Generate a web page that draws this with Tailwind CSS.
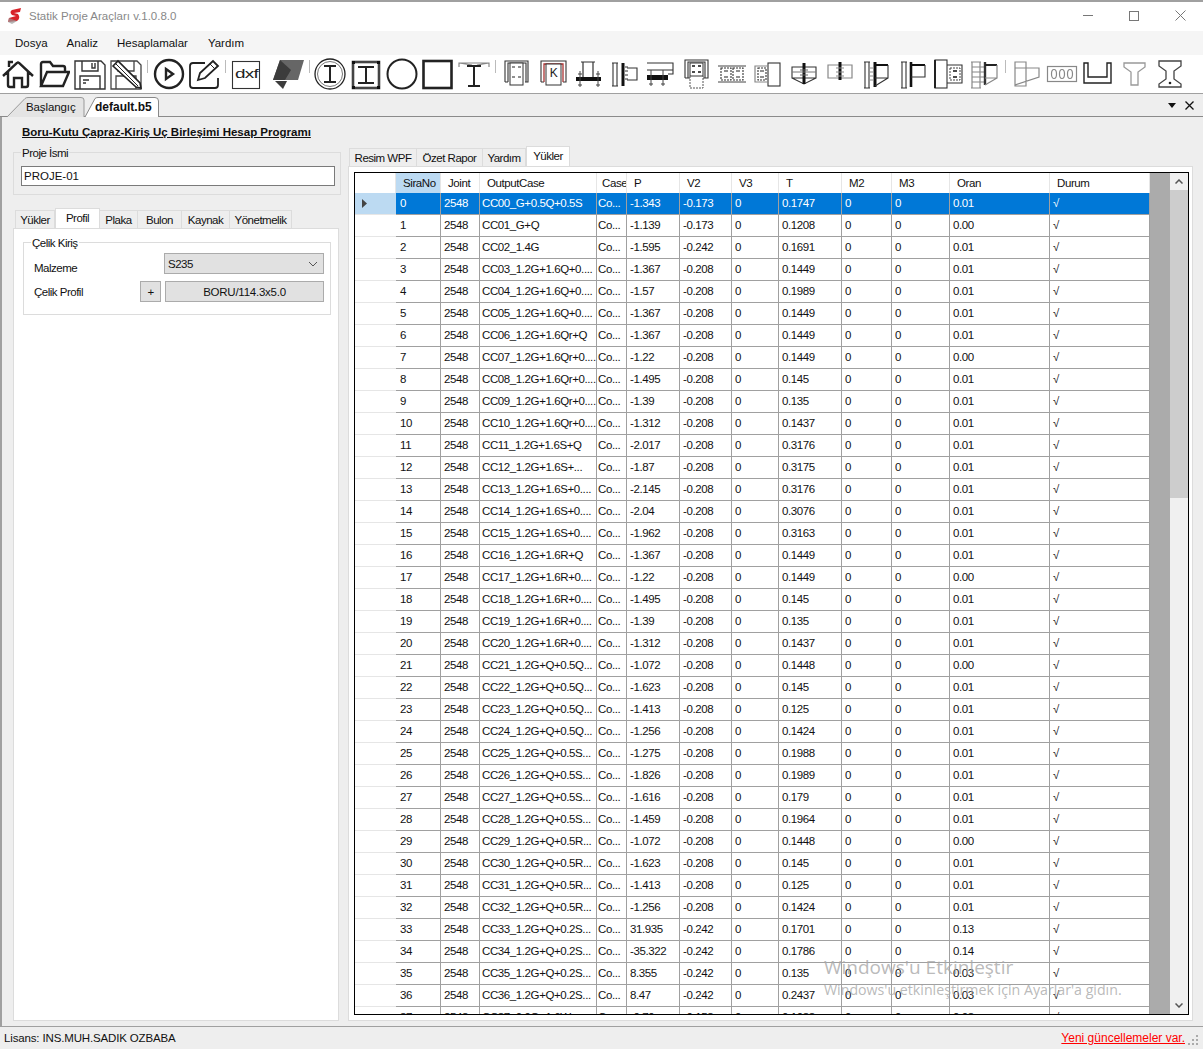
<!DOCTYPE html>
<html lang="tr">
<head>
<meta charset="UTF-8">
<title>Statik Proje Araçları</title>
<script src="https://cdn.jsdelivr.net/npm/@tailwindcss/browser@4"></script>
</head>
<body class="bg-[#eeeeee]">
<div class="relative flex h-[1049px] w-[1203px] flex-col overflow-hidden border-t-2 border-[#a0a0a0] font-['Liberation_Sans',sans-serif] text-[11.5px] leading-[16px] tracking-[-0.5px] text-[#111]">

  <!-- title bar -->
  <div class="flex h-[29px] shrink-0 items-center bg-white pb-[2px] tracking-normal">
    <svg class="ml-[7px] h-[18px] w-[16px]" viewBox="0 0 16 18"><path d="M14 1 L5 3 Q2 5 5 8 L9 9 L2 11 L1 15 L10 14 Q14 11 11 7 L7 6 L13 5 Z" fill="#d8232a"/><path d="M2 11 L1 15 L5 17 L10 14 Z" fill="#999" opacity=".7"/></svg>
    <span class="ml-[6px] text-[#888]">Statik Proje Araçları v.1.0.8.0</span>
    <div class="ml-auto flex items-center gap-[36px] pr-[17px]">
      <div class="h-px w-[10px] bg-[#777]"></div>
      <div class="h-[10px] w-[10px] border border-[#777]"></div>
      <svg class="h-[11px] w-[11px]" viewBox="0 0 11 11"><path d="M.5 .5 10.5 10.5M10.5 .5 .5 10.5" stroke="#777" fill="none"/></svg>
    </div>
  </div>

  <!-- menu -->
  <div class="flex h-[24px] shrink-0 items-center gap-[19px] bg-[#f5f5f5] pl-[15px] tracking-normal">
    <span>Dosya</span><span>Analiz</span><span>Hesaplamalar</span><span class="ml-px">Yardım</span>
  </div>

  <!-- toolbar -->
  <div id="toolbar" class="relative h-[39px] shrink-0 border-b border-[#a0a0a0] bg-white"></div>

  <!-- document tabs -->
  <div class="relative flex h-[23px] shrink-0 items-end border-b border-[#8a8a8a] bg-[#eeeeee]">
    <svg class="absolute left-0 top-[3px] h-[20px] w-[170px]" viewBox="0 0 170 20">
      <path d="M7 20 25 1.5Q26 .5 28 .5H81Q84 .5 84 3V20" fill="#e4e4e4" stroke="#999"/>
      <path d="M85 20 95 1.5Q96 .5 98 .5H155Q158.500 .5 158.500 4V20" fill="#fff" stroke="#888"/>
    </svg>
    <span class="relative ml-[26px] flex h-[19px] w-[69px] items-center tracking-[-0.1px]">Başlangıç</span>
    <span class="relative flex h-[19px] items-center text-[12px] font-bold tracking-normal">default.b5</span>
    <svg class="absolute right-[27px] top-[9px] h-[6px] w-[8px]" viewBox="0 0 8 6"><path d="M0 0H8L4 5Z" fill="#111"/></svg>
    <svg class="absolute right-[9px] top-[7px] h-[9px] w-[9px]" viewBox="0 0 9 9"><path d="M.5 .5 8.5 8.5M8.5 .5 .5 8.5" stroke="#111" stroke-width="1.3" fill="none"/></svg>
  </div>

  <!-- body -->
  <div class="flex min-h-0 flex-1 border-l-2 border-[#a0a0a0]">
    <!-- left panel -->
    <div class="w-[346px] shrink-0 pl-[11px] pt-[7px]">
      <div class="ml-[9px] font-bold tracking-normal underline">Boru-Kutu Çapraz-Kiriş Uç Birleşimi Hesap Programı</div>
      <div class="relative mt-[12px] h-[43px] w-[328px] border border-[#dcdcdc] pl-[7px] pt-[13px]">
        <span class="absolute left-[7px] top-[-8px] bg-[#eeeeee] px-px">Proje İsmi</span>
        <div class="flex h-[20px] w-[314px] items-center border border-[#7a7a7a] bg-white pl-[2px] tracking-normal">PROJE-01</div>
      </div>
      <div class="mt-[13px] flex h-[20px] items-end pl-[2px]">
        <div class="flex h-[18px] w-[40px] items-center justify-center border border-b-0 border-[#dcdcdc]">Yükler</div>
        <div class="flex h-[20px] w-[45px] items-start justify-center border border-b-0 border-[#dcdcdc] bg-white pt-px">Profil</div>
        <div class="flex h-[18px] w-[38px] items-center justify-center border border-b-0 border-l-0 border-[#dcdcdc]">Plaka</div>
        <div class="flex h-[18px] w-[44px] items-center justify-center border border-b-0 border-l-0 border-[#dcdcdc]">Bulon</div>
        <div class="flex h-[18px] w-[48px] items-center justify-center border border-b-0 border-l-0 border-[#dcdcdc]">Kaynak</div>
        <div class="flex h-[18px] w-[62px] items-center justify-center border border-b-0 border-l-0 border-[#dcdcdc]">Yönetmelik</div>
      </div>
      <div class="h-[793px] w-[326px] border border-[#dcdcdc] bg-white pl-[9px] pt-[13px]">
        <div class="relative flex h-[73px] w-[308px] flex-col gap-[7px] border border-[#dcdcdc] pl-[10px] pt-[10px]">
          <span class="absolute left-[7px] top-[-8px] bg-white px-px">Çelik Kiriş</span>
          <div class="flex h-[21px] items-center">
            <span class="w-[130px] pt-[8px]">Malzeme</span>
            <div class="flex h-[21px] w-[160px] items-center justify-between border border-[#ababab] bg-[#e1e1e1] px-[3px]">
              <span>S235</span>
              <svg class="mr-[2px] h-[6px] w-[10px]" viewBox="0 0 10 6"><path d="M1 1 5 5 9 1" stroke="#555" fill="none"/></svg>
            </div>
          </div>
          <div class="flex h-[21px] items-center">
            <span class="w-[106px]">Çelik Profil</span>
            <div class="flex h-[21px] w-[21px] items-center justify-center border border-[#ababab] bg-[#e1e1e1]">+</div>
            <div class="ml-[4px] flex h-[21px] w-[159px] items-center justify-center border border-[#ababab] bg-[#e1e1e1] tracking-[-0.25px]">BORU/114.3x5.0</div>
          </div>
        </div>
      </div>
    </div>

    <!-- right panel -->
    <div class="w-[853px] pt-[29px]">
      <div class="flex h-[20px] items-end pl-px">
        <div class="flex h-[18px] w-[68px] items-center justify-center border border-b-0 border-[#dcdcdc]">Resim WPF</div>
        <div class="flex h-[18px] w-[66px] items-center justify-center border border-b-0 border-l-0 border-[#dcdcdc]">Özet Rapor</div>
        <div class="flex h-[18px] w-[43px] items-center justify-center border border-b-0 border-l-0 border-[#dcdcdc]">Yardım</div>
        <div class="flex h-[20px] w-[44px] items-start justify-center border border-b-0 border-[#dcdcdc] bg-white pt-px">Yükler</div>
      </div>
      <div class="h-[855px] w-[845px] border border-[#dcdcdc] bg-white pl-[5px] pt-[5px]">
        <div class="flex h-[843px] w-[835px] border border-black">
          <div id="grid" class="h-full w-[795px] shrink-0 overflow-hidden tracking-[-0.4px]"></div>
          <div class="h-full w-[20px] shrink-0 bg-[#ababab]"></div>
          <div class="flex h-full w-[18px] shrink-0 flex-col bg-[#f0f0f0]">
            <div class="flex h-[17px] items-center justify-center">
              <svg class="h-[5px] w-[8px]" viewBox="0 0 8 5"><path d="M.5 4.5 4 1 7.5 4.5" stroke="#555" stroke-width="1.5" fill="none"/></svg>
            </div>
            <div class="h-[308px] bg-[#cdcdcd]"></div>
            <div class="mt-auto flex h-[17px] items-center justify-center">
              <svg class="h-[5px] w-[8px]" viewBox="0 0 8 5"><path d="M.5 .5 4 4 7.5 .5" stroke="#555" stroke-width="1.5" fill="none"/></svg>
            </div>
          </div>
        </div>
      </div>
    </div>
  </div>

  <!-- status bar -->
  <div class="flex h-[23px] shrink-0 items-center justify-between border-t border-[#a0a0a0] bg-[#eeeeee] pl-[4px] pr-[18px] tracking-[-0.15px]">
    <span>Lisans: INS.MUH.SADIK OZBABA</span>
    <span class="text-[12px] tracking-normal text-[#f00] underline">Yeni güncellemeler var.</span>
  </div>
  <svg class="absolute bottom-[3px] right-[4px] h-[11px] w-[11px]" viewBox="0 0 11 11" fill="#aaa"><rect x="8" y="0" width="2" height="2"/><rect x="4" y="4" width="2" height="2"/><rect x="8" y="4" width="2" height="2"/><rect x="0" y="8" width="2" height="2"/><rect x="4" y="8" width="2" height="2"/><rect x="8" y="8" width="2" height="2"/></svg>

  <!-- activation watermark -->
  <div class="pointer-events-none absolute left-[824px] top-[952px] font-['Open_Sans',sans-serif] text-[19px] leading-[26px] tracking-normal text-[#a8a8a8]/80">Windows'u Etkinleştir</div>
  <div class="pointer-events-none absolute left-[824px] top-[978px] font-['Open_Sans',sans-serif] text-[14.2px] leading-[20px] tracking-normal text-[#a8a8a8]/80">Windows'u etkinleştirmek için Ayarlar'a gidın.</div>
</div>

<script>
// [case, P, V2, T, Oran]
const rows = [
['CC00_G+0.5Q+0.5S','-1.343','-0.173','0.1747','0.01'],['CC01_G+Q','-1.139','-0.173','0.1208','0.00'],
['CC02_1.4G','-1.595','-0.242','0.1691','0.01'],['CC03_1.2G+1.6Q+0....','-1.367','-0.208','0.1449','0.01'],
['CC04_1.2G+1.6Q+0....','-1.57','-0.208','0.1989','0.01'],['CC05_1.2G+1.6Q+0....','-1.367','-0.208','0.1449','0.01'],
['CC06_1.2G+1.6Qr+Q','-1.367','-0.208','0.1449','0.01'],['CC07_1.2G+1.6Qr+0....','-1.22','-0.208','0.1449','0.00'],
['CC08_1.2G+1.6Qr+0....','-1.495','-0.208','0.145','0.01'],['CC09_1.2G+1.6Qr+0....','-1.39','-0.208','0.135','0.01'],
['CC10_1.2G+1.6Qr+0....','-1.312','-0.208','0.1437','0.01'],['CC11_1.2G+1.6S+Q','-2.017','-0.208','0.3176','0.01'],
['CC12_1.2G+1.6S+...','-1.87','-0.208','0.3175','0.01'],['CC13_1.2G+1.6S+0....','-2.145','-0.208','0.3176','0.01'],
['CC14_1.2G+1.6S+0....','-2.04','-0.208','0.3076','0.01'],['CC15_1.2G+1.6S+0....','-1.962','-0.208','0.3163','0.01'],
['CC16_1.2G+1.6R+Q','-1.367','-0.208','0.1449','0.01'],['CC17_1.2G+1.6R+0....','-1.22','-0.208','0.1449','0.00'],
['CC18_1.2G+1.6R+0....','-1.495','-0.208','0.145','0.01'],['CC19_1.2G+1.6R+0....','-1.39','-0.208','0.135','0.01'],
['CC20_1.2G+1.6R+0....','-1.312','-0.208','0.1437','0.01'],['CC21_1.2G+Q+0.5Q...','-1.072','-0.208','0.1448','0.00'],
['CC22_1.2G+Q+0.5Q...','-1.623','-0.208','0.145','0.01'],['CC23_1.2G+Q+0.5Q...','-1.413','-0.208','0.125','0.01'],
['CC24_1.2G+Q+0.5Q...','-1.256','-0.208','0.1424','0.01'],['CC25_1.2G+Q+0.5S...','-1.275','-0.208','0.1988','0.01'],
['CC26_1.2G+Q+0.5S...','-1.826','-0.208','0.1989','0.01'],['CC27_1.2G+Q+0.5S...','-1.616','-0.208','0.179','0.01'],
['CC28_1.2G+Q+0.5S...','-1.459','-0.208','0.1964','0.01'],['CC29_1.2G+Q+0.5R...','-1.072','-0.208','0.1448','0.00'],
['CC30_1.2G+Q+0.5R...','-1.623','-0.208','0.145','0.01'],['CC31_1.2G+Q+0.5R...','-1.413','-0.208','0.125','0.01'],
['CC32_1.2G+Q+0.5R...','-1.256','-0.208','0.1424','0.01'],['CC33_1.2G+Q+0.2S...','31.935','-0.242','0.1701','0.13'],
['CC34_1.2G+Q+0.2S...','-35.322','-0.242','0.1786','0.14'],['CC35_1.2G+Q+0.2S...','8.355','-0.242','0.135','0.03'],
['CC36_1.2G+Q+0.2S...','8.47','-0.242','0.2437','0.03'],['CC37_0.9G+1.6W...','-0.79','-0.158','0.1033','0.03']
];
const rowCls = 'grid grid-cols-[41px_45px_39px_117px_30px_53px_52px_47px_63px_50px_58px_100px_100px]';
const headers = ['', 'SiraNo', 'Joint', 'OutputCase', 'Case', 'P', 'V2', 'V3', 'T', 'M2', 'M3', 'Oran', 'Durum'];
let html = '<div class="' + rowCls + ' h-[20px]">' + headers.map((h, i) =>
  '<div class="flex items-center overflow-hidden whitespace-nowrap border-r border-[#e6e6e6] ' + (i == 4 ? 'pl-[5px] ' : 'pl-[7px] ') + (i == 1 ? 'bg-[#bcdaf2]' : 'bg-white') + '">' + h + '</div>').join('') + '</div>';
rows.forEach((r, i) => {
  const sel = i == 0;
  const cell = 'flex items-center overflow-hidden whitespace-nowrap border-b border-r border-[#a0a0a0] pb-[2px] ' + (sel ? 'bg-[#0078d7] text-white ' : 'bg-white ');
  const vals = [i, '2548', r[0], 'Co...', r[1], r[2], '0', r[3], '0', '0', r[4], '√'];
  html += '<div class="' + rowCls + ' h-[22px]">'
    + '<div class="flex items-center border-b border-[#e6e6e6] pl-[7px] ' + (sel ? 'bg-[#bcdaf2]' : 'bg-white') + '">'
    + (sel ? '<svg class="h-[9px] w-[5px]" viewBox="0 0 5 9"><path d="M0 0 5 4.500 0 9Z" fill="#444"/></svg>' : '') + '</div>'
    + vals.map((v, j) => '<div class="' + cell + (j == 0 ? 'pl-[4px]' : j == 2 ? 'pl-[2px]' : j == 3 ? 'pl-px' : 'pl-[3px]') + '">' + v + '</div>').join('') + '</div>';
});
document.getElementById('grid').innerHTML = html;

// toolbar icons: [center x, svg body] in a 32x32 box
const dark = 'fill="none" stroke="#222" stroke-width="2.4"';
const mid = 'fill="none" stroke="#222" stroke-width="1.8"';
const thin = 'fill="none" stroke="#333" stroke-width="1.1"';
const gray = 'fill="none" stroke="#888" stroke-width="1.2"';
const beam = '<path d="M11 9H23M17 9V25M11 25H23" fill="none" stroke="#222" stroke-width="2"/>';
const bolts = '<path d="M12 9h3M18 9h3M12 19h3M18 19h3" stroke="#222" stroke-width="1.2"/>';
const ticks = '<path d="M10 10H14M10 14H14M10 18H14M10 22H14" stroke="#888"/>';
const icons = [
  [18, '<path d="M1 18 15 5Q16 4 17 5L31 18M6 14V27Q6 29 8 29H12V20H20V29H24Q26 29 26 27V14M7 9V4H11" ' + dark + '/>'],
  [54, '<path d="M3 28V6Q3 4 5 4H12L15 8H25Q27 8 27 10V14M3 28H25L31 14H9L3 28Z" ' + dark + '/>'],
  [90, '<path d="M1 3H27L31 7V31H1ZM8 3V13H24V3M6 31V18H26V31M9 22H15M9 25H12M18 5V10H21V5" fill="none" stroke="#333" stroke-width="1.4"/>'],
  [126, '<path d="M1 3H27L31 7V31H1ZM8 3V13H24V3M6 31V18H26V31" fill="none" stroke="#444" stroke-width="1.3"/><path d="M3 8 8 3 30 25 31 30 26 29Z" fill="#fff" stroke="#222" stroke-width="1.6"/><path d="M6 6 28 28" stroke="#222"/>'],
  [169, '<circle cx="16" cy="16" r="14" ' + dark + '/><path d="M13 11 20 16 13 21Z" ' + dark + '/>'],
  [204, '<path d="M17 5H5Q2 5 2 8V27Q2 30 5 30H27Q30 30 30 27V20" ' + mid + '/><path d="M10 22 12 15 25 3 30 8 17 20Z" ' + mid + '/><path d="M22 6 27 11" stroke="#222"/>'],
  [246, '<rect x="2.500" y="3.500" width="27" height="27" fill="none" stroke="#333" stroke-width="1.1"/><text x="5" y="20" textLength="23" lengthAdjust="spacingAndGlyphs" font-family="Liberation Sans" font-size="13" fill="#222">dxf</text>'],
  [288, '<path d="M8 2H32L26 22H1Z" fill="#666"/><path d="M8 2 19 12 13 22H1Z" fill="#3c3c3c"/><path d="M3 23H15L11 31Z" fill="#3c3c3c"/>'],
  [330, '<circle cx="16" cy="16" r="15" fill="none" stroke="#222" stroke-width="1.3"/><circle cx="16" cy="16" r="12.500" fill="none" stroke="#777"/><g transform="translate(-1 -1)">' + beam + '</g>'],
  [366, '<rect x="3" y="4" width="26" height="26" fill="none" stroke="#444" stroke-width="2.6"/><path d="M2 3h3v3H2zM27 3h3v3h-3zM2 28h3v3H2zM27 28h3v3h-3z" fill="#111"/><g transform="translate(-1 0)"><path d="M9 9H25M17 9V25M9 25H25" fill="none" stroke="#222" stroke-width="2"/></g>'],
  [402, '<circle cx="16" cy="16" r="14.500" fill="none" stroke="#222" stroke-width="2"/>'],
  [438, '<rect x="1.500" y="3" width="28" height="27" fill="none" stroke="#222" stroke-width="2.6"/>'],
  [474, '<path d="M1 9V5H31V9M1 5 14 7M31 5 19 7" ' + gray + '/><path d="M9 8H23M16 8V28M10 28H22" fill="none" stroke="#222" stroke-width="2"/>'],
  [516, '<path d="M5 24V3H28V24H25M8 24H5M8 24V5H26V24" ' + thin + '/><rect x="10" y="5" width="13" height="22" fill="#fff" stroke="#333"/>' + bolts],
  [552, '<path d="M5 24V3H30V24H27M8 24H5" ' + thin + '/><path d="M8 24V6H27V24" fill="none" stroke="#a33" stroke-width="1.3"/><rect x="10" y="6" width="15" height="21" fill="#fff" stroke="#333"/><text x="17.500" y="19" text-anchor="middle" font-family="Liberation Sans" font-size="12" fill="#222">K</text>'],
  [588, '<path d="M11 4V20M21 4V20M9 4H23" fill="none" stroke="#333" stroke-width="1.2"/><path d="M4 21H29" stroke="#111" stroke-width="4"/><path d="M8 13V29M26 13V29" stroke="#444"/><path d="M6 16H10M24 16H28M6 27H10M24 27H28" stroke="#444"/>'],
  [624, '<path d="M5 5V28M9 5V28M4 5H10M4 28H10" ' + thin + '/><path d="M15 5V28" stroke="#111" stroke-width="3"/><path d="M19 10H29V22H19" ' + thin + '/><path d="M17 9H20M17 13H20M17 17H20M17 21H20" stroke="#333"/>'],
  [660, '<path d="M3 5H29V16H24M3 12H29" ' + thin + '/><path d="M3 19.500H24" stroke="#111" stroke-width="5"/><path d="M7 12V28M19 12V28M5 26H9M17 26H21" stroke="#444"/>'],
  [696, '<path d="M5 20V2H28V20H23M10 20H5M8 20V4H25V20" ' + thin + '/><rect x="10" y="5" width="13" height="13" fill="#fff" stroke="#333"/><path d="M12 8h3M18 8h3M12 14h3M18 14h3" stroke="#111" stroke-width="1.6"/><path d="M10 18V30H23V18" fill="none" stroke="#555" stroke-dasharray="2 1"/>'],
  [732, '<path d="M2 8H30M2 24H30" stroke="#444"/><rect x="5" y="10" width="10" height="12" ' + thin + ' stroke-dasharray="2 1"/><rect x="17" y="10" width="10" height="12" ' + thin + ' stroke-dasharray="2 1"/><path d="M8 13h4M8 19h4M20 13h4M20 19h4" stroke="#222" stroke-width="1.2"/>'],
  [768, '<rect x="16" y="5" width="12" height="23" ' + thin + '/><path d="M16 8H3V24H16" ' + gray + '/><rect x="6" y="10" width="8" height="12" ' + thin + ' stroke-dasharray="2 1"/><path d="M8 13h4M8 19h4" stroke="#222" stroke-width="1.2"/>'],
  [804, '<path d="M4 9H28V20H4ZM4 20 16 26 28 20" ' + thin + '/><path d="M16 5V26" stroke="#111" stroke-width="3"/><path d="M4 14H28" stroke="#777"/><path d="M12 12H20M12 17H20" stroke="#666"/>'],
  [840, '<path d="M4 7H28V20H4Z" ' + gray + '/><path d="M16 4V22" stroke="#111" stroke-width="3"/><path d="M12 10H20M12 14H20M12 18H20" stroke="#888"/>'],
  [876, '<path d="M5 4V30M9 4V30M4 4H10M4 30H10" ' + thin + '/><path d="M15 4V29" stroke="#111" stroke-width="3"/><path d="M15 7H28" stroke="#111" stroke-width="2"/><path d="M28 7V20H15M15 28 28 20" ' + thin + '/>' + ticks],
  [912, '<path d="M6 4V30M10 4V30M5 4H11M5 30H11" ' + thin + '/><path d="M15 4V29" stroke="#111" stroke-width="2.6"/><path d="M15 7H29" stroke="#111" stroke-width="2"/><path d="M29 7V19H15" ' + thin + '/>'],
  [948, '<rect x="3" y="2" width="12" height="28" ' + thin + '/><path d="M3 2V30" stroke="#222" stroke-width="2"/><path d="M15 7H30V25H15" ' + thin + '/><path d="M18 10H28V22H18Z" fill="none" stroke="#444" stroke-dasharray="2 1"/><path d="M21 13h4M21 19h4" stroke="#111" stroke-width="1.3"/>'],
  [984, '<path d="M4 4V30M12 4V30M3 4H13M3 30H13M4 9H16M4 14H16M4 19H16M4 24H16" ' + gray + '/><path d="M17 4V27" stroke="#333" stroke-width="2.4"/><path d="M17 7H29" stroke="#222" stroke-width="2"/><path d="M29 7V20H17M17 27 29 20" ' + gray + '/>'],
  [1026, '<path d="M5 4H16V28H5ZM5 10H29V19L5 27" ' + gray + '/>'],
  [1062, '<rect x="1.500" y="8.500" width="29" height="15" ' + gray + '/><ellipse cx="8" cy="16" rx="2.500" ry="4.500" ' + gray + '/><ellipse cx="16" cy="16" rx="2.500" ry="4.500" ' + gray + '/><ellipse cx="24" cy="16" rx="2.500" ry="4.500" ' + gray + '/>'],
  [1098, '<path d="M2 5H6V19H25V5H29V25H2Z" fill="none" stroke="#222" stroke-width="1.4"/>'],
  [1134, '<path d="M6 5H27V9L20 14V27H13V14L6 9Z" fill="none" stroke="#999" stroke-width="1.3"/>'],
  [1170, '<path d="M5 3H27V8L20 13V21L27 26V29H5V26L12 21V13L5 8Z" fill="none" stroke="#444" stroke-width="1.3"/><circle cx="16" cy="25" r="1.300" fill="#222"/>']
];
const seps = [147, 225, 309, 495, 1005];
document.getElementById('toolbar').innerHTML =
  '<div class="flex h-[38px] items-center">' + icons.map((ic, i) => {
    const prev = i ? icons[i - 1][0] : 0;
    const gap = ic[0] - prev - (i ? 32 : 16);
    return '<svg class="h-[32px] w-[32px] shrink-0" style="margin-left:' + gap + 'px" viewBox="0 0 32 32">' + ic[1] + '</svg>';
  }).join('') + '</div>'
  + seps.map(x => '<div class="absolute top-[5px] h-[13px] w-px bg-[#bbb]" style="left:' + x + 'px"></div>').join('');
</script>
</body>
</html>
